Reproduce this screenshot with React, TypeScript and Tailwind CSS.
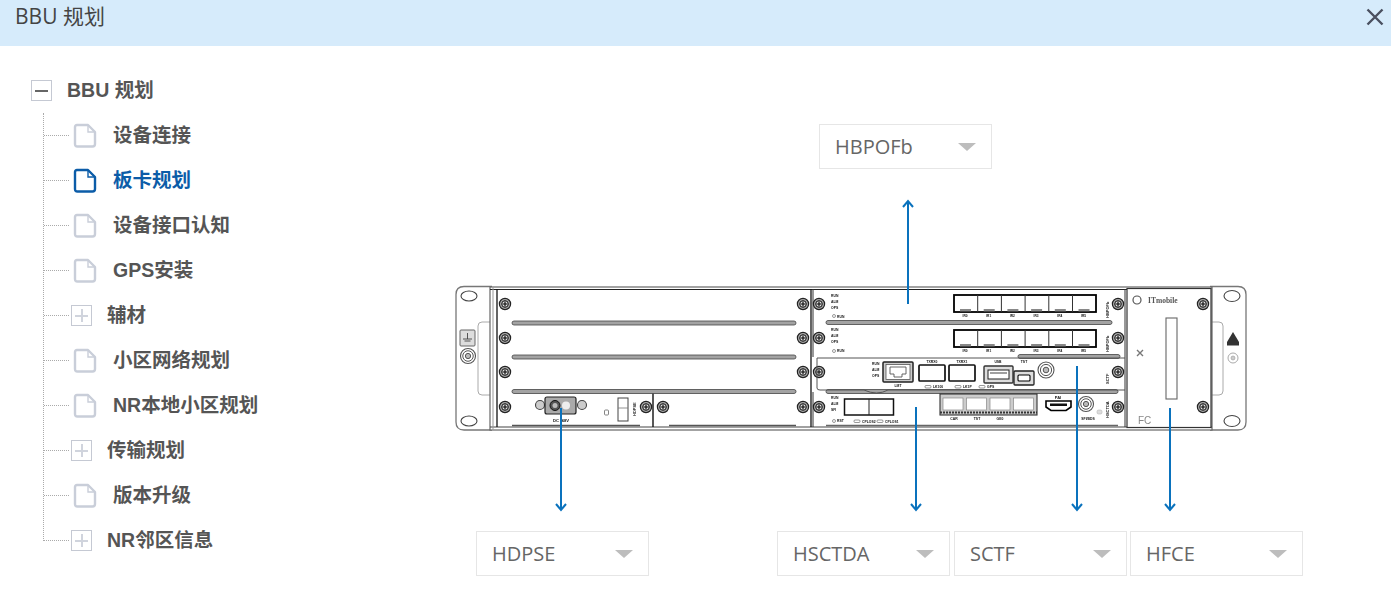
import React from 'react';

const FONT = { fontFamily: '"Open Sans", "Noto Sans CJK SC", sans-serif' };
const TREE_FONT = { fontFamily: '"Liberation Sans", "Noto Sans CJK SC", sans-serif' };

type TreeItem = { label: string; kind: 'file' | 'plus'; active?: boolean };

const treeItems: TreeItem[] = [
    { label: '设备连接', kind: 'file' },
    { label: '板卡规划', kind: 'file', active: true },
    { label: '设备接口认知', kind: 'file' },
    { label: 'GPS安装', kind: 'file' },
    { label: '辅材', kind: 'plus' },
    { label: '小区网络规划', kind: 'file' },
    { label: 'NR本地小区规划', kind: 'file' },
    { label: '传输规划', kind: 'plus' },
    { label: '版本升级', kind: 'file' },
    { label: 'NR邻区信息', kind: 'plus' },
];

function FileIcon({ active }: { active?: boolean }) {
    return (
        <svg width="24" height="25" viewBox="0 0 24 25" fill="none" className={active ? 'text-[#0b5ca8]' : 'text-[#c9ced9]'}>
            <path d="M4 2 H15 L22 9 V21 Q22 23.5 19.5 23.5 H4.5 Q2 23.5 2 21 V4 Q2 2 4 2 Z" stroke="currentColor" strokeWidth="2.4" strokeLinejoin="round" />
            <path d="M15 2 V9 H22" stroke="currentColor" strokeWidth="1.4" />
        </svg>
    );
}

function ToggleBox({ open }: { open?: boolean }) {
    return (
        <span className="relative block w-[21px] h-[21px] border border-[#c5c9d3] bg-white shrink-0">
            <span className={`absolute left-[3px] right-[3px] top-[9px] h-[2px] ${open ? 'bg-[#666]' : 'bg-[#d0d4dd]'}`} />
            {!open && <span className="absolute top-[3px] bottom-[3px] left-[9px] w-[2px] bg-[#d0d4dd]" />}
        </span>
    );
}

function Tree() {
    return (
        <div className="w-[400px] shrink-0 pl-[31px] pt-[22px] text-[19.5px] font-bold text-[#555]" style={TREE_FONT}>
            <div className="flex items-center h-[45px]">
                <ToggleBox open />
                <span className="ml-[15px]">BBU 规划</span>
            </div>
            <ul className="ml-[12px] border-l border-dotted border-[#aaa] h-[428px]">
                {treeItems.map((item) => (
                    <li key={item.label} className="flex items-center h-[45px]">
                        <span className="w-[25px] border-t border-dotted border-[#aaa] shrink-0" />
                        {item.kind === 'file' ? (
                            <>
                                <span className="ml-[4px] shrink-0"><FileIcon active={item.active} /></span>
                                <span className={`ml-[16px] whitespace-nowrap ${item.active ? 'text-[#0b5ca8]' : ''}`}>{item.label}</span>
                            </>
                        ) : (
                            <>
                                <span className="ml-[2px]"><ToggleBox /></span>
                                <span className="ml-[15px] whitespace-nowrap">{item.label}</span>
                            </>
                        )}
                    </li>
                ))}
            </ul>
        </div>
    );
}

function Screw({ x, y }: { x: number; y: number }) {
    return (
        <g>
            <circle cx={x} cy={y} r="5.6" fill="#a8a8a8" stroke="#222" strokeWidth="1.2" />
            <circle cx={x} cy={y} r="3.3" fill="#e4e4e4" stroke="#111" strokeWidth="1" />
            <path d={`M${x - 2.5} ${y} H${x + 2.5} M${x} ${y - 2.5} V${y + 2.5}`} stroke="#000" strokeWidth="1.1" />
        </g>
    );
}

function Rail({ x1, x2, y }: { x1: number; x2: number; y: number }) {
    return (
        <g>
            <rect x={x1} y={y - 2} width={x2 - x1} height="4" rx="2" fill="#a3a3a3" stroke="#444" strokeWidth="0.8" />
        </g>
    );
}

function Label({ x, y, children, size = 3.4, anchor = 'start' }: { x: number; y: number; children: string; size?: number; anchor?: 'start' | 'middle' }) {
    return (
        <text x={x} y={y} fontSize={size} fontWeight="700" fill="#111" textAnchor={anchor} fontFamily='"Liberation Sans", sans-serif'>
            {children}
        </text>
    );
}

function SfpBlock({ y, labels }: { y: number; labels: string[] }) {
    const cells = [0, 1, 2, 3, 4, 5];
    return (
        <g>
            <rect x="954" y={y} width="142" height="17" fill="#fff" stroke="#000" strokeWidth="1.8" />
            {cells.map((i) => (
                <g key={i}>
                    {i > 0 && <line x1={954 + i * 23.7} x2={954 + i * 23.7} y1={y} y2={y + 17} stroke="#333" strokeWidth="1" />}
                    <rect x={960 + i * 23.7} y={y + 14} width="11" height="2.4" fill="#888" />
                    <Label x={965 + i * 23.7} y={y + 22} size={3.2} anchor="middle">{labels[i]}</Label>
                </g>
            ))}
        </g>
    );
}

function LedLabels({ x, y, labels }: { x: number; y: number; labels: string[] }) {
    return (
        <g>
            {labels.map((t, i) => (
                <Label key={t} x={x} y={y + i * 6}>{t}</Label>
            ))}
        </g>
    );
}

function Coax({ x, y, r }: { x: number; y: number; r: number }) {
    return (
        <g fill="#fff" stroke="#555">
            <circle cx={x} cy={y} r={r} strokeWidth="1.1" />
            <circle cx={x} cy={y} r={r * 0.7} strokeWidth="1" />
            <circle cx={x} cy={y} r={r * 0.35} strokeWidth="1" fill="#bbb" />
        </g>
    );
}

function Arrow({ x, y1, y2 }: { x: number; y1: number; y2: number }) {
    const dir = y2 > y1 ? -1 : 1;
    return (
        <g stroke="#0a72bd" strokeWidth="2" fill="none">
            <line x1={x} x2={x} y1={y1} y2={y2} />
            <path d={`M${x - 5} ${y2 + dir * 6} L${x} ${y2} L${x + 5} ${y2 + dir * 6}`} />
        </g>
    );
}

function Chassis() {
    const rows = [304, 338, 372, 407];
    return (
        <g className="blur-[0.45px]">
            {/* left bracket */}
            <path d="M492 286.5 H464 Q456 286.5 456 294.5 V422 Q456 430 464 430 H492" fill="#fff" stroke="#777" strokeWidth="1.3" />
            <path d="M490 322 H482 Q478 322 478 326 V391 Q478 395 482 395 H490" fill="none" stroke="#aaa" strokeWidth="1" />
            <ellipse cx="469" cy="296" rx="8" ry="5" fill="#fff" stroke="#444" strokeWidth="1.1" />
            <ellipse cx="469" cy="421" rx="8" ry="5" fill="#fff" stroke="#444" strokeWidth="1.1" />
            <rect x="460" y="330" width="15" height="16" rx="1" fill="#ddd" stroke="#666" strokeWidth="1" />
            <path d="M467.5 333 V339 M463 339 H472 M464.5 341 H470.5" stroke="#444" strokeWidth="0.9" />
            <Coax x={468} y={356} r={7.5} />

            {/* right bracket */}
            <path d="M1210 286.5 H1238 Q1246 286.5 1246 294.5 V422 Q1246 430 1238 430 H1210" fill="#fff" stroke="#777" strokeWidth="1.3" />
            <path d="M1212 322 H1219 Q1223 322 1223 326 V391 Q1223 395 1219 395 H1212" fill="none" stroke="#aaa" strokeWidth="1" />
            <ellipse cx="1232" cy="296" rx="8" ry="5.5" fill="#fff" stroke="#444" strokeWidth="1.1" />
            <ellipse cx="1232" cy="421" rx="8" ry="5.5" fill="#fff" stroke="#444" strokeWidth="1.1" />
            <path d="M1233 332 L1239 342 V345.5 H1227 V342 Z" fill="#333" />
            <circle cx="1233" cy="358" r="5" fill="#fff" stroke="#aaa" strokeWidth="1" />
            <circle cx="1233" cy="358" r="2" fill="#ccc" stroke="#999" strokeWidth="0.6" />

            {/* chassis */}
            <rect x="490" y="287" width="722" height="143" fill="#fff" stroke="#666" strokeWidth="1.2" />
            <line x1="490" x2="1127" y1="289.5" y2="289.5" stroke="#222" strokeWidth="1.2" />
            <line x1="490" x2="1212" y1="427" y2="427" stroke="#444" strokeWidth="1.2" />
            <line x1="493" x2="493" y1="287" y2="430" stroke="#999" strokeWidth="1" />
            <line x1="497" x2="497" y1="289" y2="427" stroke="#111" strokeWidth="1.3" />
            <line x1="811" x2="811" y1="289" y2="427" stroke="#111" strokeWidth="1.3" />
            <line x1="813" x2="813" y1="289" y2="357" stroke="#333" strokeWidth="1" />
            <line x1="813" x2="813" y1="392" y2="427" stroke="#333" strokeWidth="1" />
            <line x1="653" x2="653" y1="392" y2="427" stroke="#111" strokeWidth="1.4" />

            {/* left slots */}
            <Rail x1={512} x2={796} y={323} />
            <Rail x1={512} x2={796} y={357} />
            <Rail x1={512} x2={796} y={391.5} />
            <line x1="512" x2="640" y1="425.5" y2="425.5" stroke="#555" strokeWidth="1.4" />
            <line x1="669" x2="796" y1="425.5" y2="425.5" stroke="#555" strokeWidth="1.4" />
            {rows.map((y) => (
                <g key={y}>
                    <Screw x={505} y={y} />
                    <Screw x={803} y={y} />
                    <Screw x={819} y={y} />
                    <Screw x={1118} y={y} />
                </g>
            ))}
            <Screw x={646} y={407} />
            <Screw x={663} y={407} />

            {/* power module */}
            <circle cx="540" cy="405" r="4.5" fill="#ccc" stroke="#444" strokeWidth="1.1" />
            <circle cx="582" cy="405" r="4.5" fill="#ccc" stroke="#444" strokeWidth="1.1" />
            <rect x="545" y="397" width="31" height="17" rx="2" fill="#aaa" stroke="#222" strokeWidth="1.2" />
            <circle cx="555" cy="405.5" r="5" fill="#555" stroke="#111" />
            <circle cx="555" cy="405.5" r="2.5" fill="#bbb" />
            <circle cx="566" cy="405.5" r="4" fill="#eee" />
            <Label x={561} y={422} size={4.2} anchor="middle">DC -48V</Label>
            <rect x="604.5" y="410" width="4" height="5" rx="1" fill="#fff" stroke="#666" strokeWidth="0.8" />
            <rect x="618" y="398" width="10" height="23" fill="#fff" stroke="#444" strokeWidth="1" />
            <line x1="618" x2="628" y1="408" y2="408" stroke="#777" strokeWidth="0.8" />
            <text x="0" y="0" transform="translate(636 416) rotate(-90)" fontSize="4" fontWeight="700" fill="#111" fontFamily='"Liberation Sans", sans-serif'>HDPSE</text>

            {/* right cards */}
            <Rail x1={826} x2={1112} y={322.5} />
            <Rail x1={1018} x2={1120} y={356.5} />
            <Rail x1={826} x2={1118} y={391.5} />
            <line x1="826" x2="1118" y1="425.5" y2="425.5" stroke="#666" strokeWidth="1.4" />
            <line x1="1125" x2="1125" y1="289" y2="427" stroke="#333" strokeWidth="1" />

            <LedLabels x={831} y={297} labels={['RUN', 'ALM', 'OPS']} />
            <circle cx="834" cy="316" r="1.5" fill="#fff" stroke="#555" strokeWidth="0.6" />
            <Label x={837} y={317.5}>RUN</Label>
            <SfpBlock y={295} labels={['IR0', 'IR1', 'IR2', 'IR3', 'IR4', 'IR5']} />

            <LedLabels x={831} y={331} labels={['RUN', 'ALM', 'OPS']} />
            <circle cx="834" cy="351" r="1.5" fill="#fff" stroke="#555" strokeWidth="0.6" />
            <Label x={837} y={352}>RUN</Label>
            <SfpBlock y={330} labels={['IR0', 'IR1', 'IR2', 'IR3', 'IR4', 'IR5']} />

            {/* SCTF card */}
            <path d="M817 358 H1125 M817 358 V388 Q817 390 820 390 H864 Q877 396 888 390 H1125" fill="none" stroke="#555" strokeWidth="1" />
            <LedLabels x={872} y={365} labels={['RUN', 'ALM', 'OPS']} />
            <rect x="883" y="362" width="30" height="20" rx="1" fill="#ccc" stroke="#222" strokeWidth="1.5" />
            <rect x="886" y="364.5" width="24" height="15" fill="#fff" stroke="#555" strokeWidth="0.8" />
            <path d="M890 367 H906 V374 H902 V377 H894 V374 H890 Z" fill="none" stroke="#555" strokeWidth="0.9" />
            <Label x={898} y={387} anchor="middle">LMT</Label>
            <rect x="919" y="365" width="26" height="16" rx="1" fill="#fff" stroke="#111" strokeWidth="1.7" />
            <rect x="949" y="365" width="26" height="16" rx="1" fill="#fff" stroke="#111" strokeWidth="1.7" />
            <Label x={932} y={362.5} anchor="middle">TXRX0</Label>
            <Label x={962} y={362.5} anchor="middle">TXRX1</Label>
            <rect x="925" y="385.5" width="6" height="2.5" rx="1" fill="#fff" stroke="#555" strokeWidth="0.6" />
            <Label x={933} y={388}>LK100</Label>
            <rect x="955" y="385.5" width="6" height="2.5" rx="1" fill="#fff" stroke="#555" strokeWidth="0.6" />
            <Label x={963} y={388}>LK1P</Label>
            <rect x="979" y="385.5" width="6" height="2.5" rx="1" fill="#fff" stroke="#555" strokeWidth="0.6" />
            <Label x={987} y={388}>GPS</Label>
            <rect x="984" y="366" width="29" height="17" rx="1" fill="#ddd" stroke="#333" strokeWidth="1.4" />
            <rect x="988" y="370" width="21" height="9" fill="#fff" stroke="#222" strokeWidth="1" />
            <line x1="990" x2="1007" y1="373" y2="373" stroke="#777" strokeWidth="1.4" />
            <Label x={998} y={362.5} anchor="middle">USB</Label>
            <rect x="1014" y="371" width="20" height="14" rx="1" fill="#ddd" stroke="#222" strokeWidth="1.3" />
            <rect x="1018" y="375" width="12" height="6" rx="1" fill="#fff" stroke="#000" strokeWidth="1.1" />
            <Label x={1024} y={362.5} anchor="middle">TST</Label>
            <Coax x={1046} y={370} r={8} />

            {/* HSCTDA card */}
            <LedLabels x={831} y={399} labels={['RUN', 'ALM', 'SFI']} />
            <circle cx="834" cy="421" r="1.5" fill="#fff" stroke="#555" strokeWidth="0.6" />
            <Label x={837} y={422}>RST</Label>
            <rect x="844.5" y="399" width="49" height="16" fill="#fff" stroke="#111" strokeWidth="1.5" />
            <line x1="869" x2="869" y1="399" y2="415" stroke="#222" strokeWidth="1" />
            <rect x="854" y="420" width="6" height="2.5" rx="1" fill="#fff" stroke="#555" strokeWidth="0.6" />
            <Label x={862} y={422.5}>CPLOS2</Label>
            <rect x="877" y="420" width="6" height="2.5" rx="1" fill="#fff" stroke="#555" strokeWidth="0.6" />
            <Label x={885} y={422.5}>CPLOS1</Label>
            <rect x="940" y="394" width="97" height="21" fill="#ccc" stroke="#333" strokeWidth="1.1" />
            {[0, 1, 2, 3].map((i) => (
                <rect key={i} x={943 + i * 23.5} y="398" width="20" height="12" fill="#fff" stroke="#888" strokeWidth="0.7" />
            ))}
            <line x1="940" x2="1037" y1="412.5" y2="412.5" stroke="#333" strokeWidth="1.8" strokeDasharray="2 1" />
            <Label x={954} y={420} anchor="middle">CAR</Label>
            <Label x={977} y={420} anchor="middle">TST</Label>
            <Label x={1000} y={420} anchor="middle">GE0</Label>
            <path d="M1046 401 H1071 V407 L1066 410.5 H1051 L1046 407 Z" fill="#fff" stroke="#000" strokeWidth="1.6" />
            <rect x="1050" y="403.5" width="17" height="2.5" fill="#111" />
            <Label x={1058} y={399} size={4} anchor="middle">PAI</Label>
            <Coax x={1086} y={404} r={7.5} />
            <rect x="1097" y="410" width="5" height="4" rx="1.5" fill="#ddd" stroke="#aaa" strokeWidth="0.5" />
            <Label x={1088} y={420} anchor="middle">SFI/BDS</Label>
            <g>
                {[['HBPOFb', 318], ['HBPOFb', 352], ['SCTF', 384], ['HSCTDA', 418]].map(([t, y]) => (
                    <text key={String(y)} transform={`translate(1109 ${y}) rotate(-90)`} fontSize="4" fontWeight="700" fill="#111" fontFamily='"Liberation Sans", sans-serif'>{t}</text>
                ))}
            </g>

            {/* FC panel */}
            <rect x="1127" y="288.5" width="84" height="139" fill="#fff" stroke="#333" strokeWidth="1.2" />
            <circle cx="1137" cy="300" r="4" fill="#fff" stroke="#555" strokeWidth="1.2" />
            <text x="1148" y="302.5" fontSize="7.5" fontWeight="700" fill="#555" fontFamily='"Liberation Serif", serif'>ITmobile</text>
            <Screw x={1203} y={304} />
            <Screw x={1203} y={407} />
            <rect x="1166" y="318" width="11" height="81" fill="#fff" stroke="#666" strokeWidth="1.1" />
            <path d="M1137 350 L1143 356 M1143 350 L1137 356" stroke="#777" strokeWidth="1.4" />
            <text x="1138" y="424" fontSize="10" fill="#888" fontFamily='"Liberation Sans", sans-serif'>FC</text>
        </g>
    );
}

function Select({ label, left, top }: { label: string; left: string; top: string }) {
    return (
        <div className={`absolute ${left} ${top} w-[173px] h-[45px] border border-[#e6e6e6] bg-white flex items-center pl-[15px] pr-[15px] text-[20px] text-[#666]`}>
            <span>{label}</span>
            <span className="ml-auto w-0 h-0 border-l-[9px] border-r-[9px] border-t-[8px] border-l-transparent border-r-transparent border-t-[#bdbdbd]" />
        </div>
    );
}

export default function App() {
    return (
        <div className="w-[1391px] h-[594px] bg-white overflow-hidden flex flex-col" style={FONT}>
            {/* Header */}
            <div className="h-[46px] shrink-0 bg-[#d6ebfb] flex items-start justify-between pl-[15px] pr-[7px]">
                <span className="text-[21px] leading-[32px] text-[#444]">BBU 规划</span>
                <svg width="18" height="18" viewBox="0 0 18 18" className="mt-[8px]">
                    <path d="M1.5 1.5 L16.5 16.5 M16.5 1.5 L1.5 16.5" stroke="#4a5060" strokeWidth="2.4" />
                </svg>
            </div>

            {/* Body */}
            <div className="flex flex-1 min-h-0">
                <Tree />
                <div className="relative flex-1">
                    <svg className="absolute left-[40px] top-[144px]" width="820" height="380" viewBox="440 190 820 380">
                        <Chassis />
                        <Arrow x={908} y1={304} y2={201} />
                        <Arrow x={561} y1={408} y2={510} />
                        <Arrow x={916} y1={407} y2={510} />
                        <Arrow x={1077} y1={366} y2={510} />
                        <Arrow x={1170} y1={408} y2={510} />
                    </svg>
                    <Select label="HBPOFb" left="left-[419px]" top="top-[78px]" />
                    <Select label="HDPSE" left="left-[76px]" top="top-[485px]" />
                    <Select label="HSCTDA" left="left-[377px]" top="top-[485px]" />
                    <Select label="SCTF" left="left-[554px]" top="top-[485px]" />
                    <Select label="HFCE" left="left-[730px]" top="top-[485px]" />
                </div>
            </div>
        </div>
    );
}
